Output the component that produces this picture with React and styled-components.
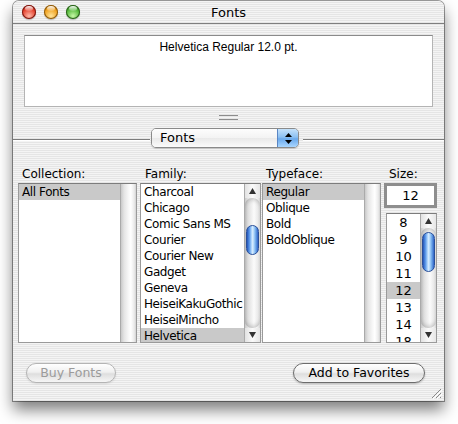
import React from 'react'
import styled, { createGlobalStyle } from 'styled-components'

const GlobalStyle = createGlobalStyle`
  html, body {
    margin: 0;
    padding: 0;
    background: #fff;
  }
  body {
    font-family: "DejaVu Sans", "Liberation Sans", sans-serif;
    color: #000;
  }
`

const pinstripe = `repeating-linear-gradient(to bottom, #f4f4f4 0px, #f4f4f4 1px, #e5e5e5 1px, #e5e5e5 2px)`

const Page = styled.div`
  width: 458px;
  height: 424px;
  box-sizing: border-box;
  padding: 1px 0 0 13px;
`

const Window = styled.div`
  position: relative;
  width: 431px;
  height: 400px;
  display: flex;
  flex-direction: column;
  background: ${pinstripe};
  border-radius: 6px 6px 0 0;
  box-shadow: 0 0 0 1px rgba(0, 0, 0, 0.38), 0 9px 15px rgba(0, 0, 0, 0.5);
`

const TitleBar = styled.div`
  height: 22px;
  border-bottom: 1px solid #7e7e7e;
  display: grid;
  grid-template-columns: 1fr auto 1fr;
  align-items: center;
  padding-left: 9px;
  font-size: 13px;
`

const Lights = styled.div`
  display: flex;
  gap: 8px;
`

const Light = styled.span`
  position: relative;
  width: 14px;
  height: 14px;
  border-radius: 50%;
  background: radial-gradient(circle at 50% 78%, ${p => p.$hi} 0%, ${p => p.$mid} 55%, ${p => p.$lo} 100%);
  box-shadow: inset 0 0 0 1px ${p => p.$edge}, 0 1px 1px rgba(0, 0, 0, 0.25);

  &::after {
    content: '';
    position: absolute;
    left: 3px;
    top: 1px;
    width: 8px;
    height: 5px;
    border-radius: 50%;
    background: linear-gradient(to bottom, rgba(255, 255, 255, 0.95), rgba(255, 255, 255, 0.15));
  }
`

const Title = styled.div`
  padding-right: 9px;
`

const Preview = styled.div`
  margin: 11px 11px 0;
  height: 72px;
  box-sizing: border-box;
  background: #fff;
  border: 1px solid #b4b4b4;
  border-top-color: #8a8a8a;
  font-family: "Liberation Sans", Arial, sans-serif;
  font-size: 12px;
  text-align: center;
  padding-top: 4px;
`

const Grip = styled.div`
  margin: 8px auto 0;
  width: 19px;
  height: 5px;
  box-sizing: border-box;
  border-top: 1px solid #8c8c8c;
  border-bottom: 1px solid #8c8c8c;
`

const PopupRow = styled.div`
  margin-top: 8px;
  height: 20px;
  display: flex;
  align-items: center;
`

const Rule = styled.div`
  flex: ${p => (p.$w ? `0 0 ${p.$w}px` : '1')};
  margin-left: ${p => p.$ml || 0}px;
  margin-top: 2px;
  height: 1px;
  background: #7c7c7c;
  box-shadow: 0 1px 0 #fff;
`

const Popup = styled.div`
  width: 148px;
  height: 20px;
  box-sizing: border-box;
  margin-left: 1px;
  display: flex;
  border: 1px solid #8a8a8a;
  border-radius: 5px;
  overflow: hidden;
  font-size: 13px;
  box-shadow: 0 1px 1px rgba(0, 0, 0, 0.15);
`

const PopupLabel = styled.div`
  flex: 1;
  padding-left: 8px;
  line-height: 18px;
  background: linear-gradient(to bottom, #fdfdfd 0%, #f3f3f3 50%, #e9e9e9 51%, #fbfbfb 100%);
`

const PopupArrows = styled.div`
  width: 20px;
  border-left: 1px solid #5a86c4;
  display: flex;
  align-items: center;
  justify-content: center;
  background: linear-gradient(to bottom, #c5e2fb 0%, #8cc0f2 45%, #6aa9ec 55%, #a9d6ff 100%);
`

const Body = styled.div`
  margin-top: 18px;
  padding-left: 5px;
  display: flex;
`

const Column = styled.div`
  width: ${p => p.$w}px;
  margin-left: ${p => p.$ml || 0}px;
  display: flex;
  flex-direction: column;
`

const Label = styled.div`
  height: 17px;
  line-height: 16px;
  padding-left: ${p => p.$pl || 4}px;
  font-size: 12px;
`

const ListBox = styled.div`
  height: ${p => p.$h}px;
  margin-top: ${p => p.$mt || 0}px;
  margin-left: ${p => p.$ml || 0}px;
  box-sizing: border-box;
  display: flex;
  background: #fff;
  border: 1px solid #9a9a9a;
  border-top-color: #7c7c7c;
  overflow: hidden;
`

const Items = styled.div`
  flex: 1;
  min-width: 0;
  overflow: hidden;
`

const Row = styled.div`
  height: ${p => p.$rh}px;
  line-height: ${p => p.$rh}px;
  padding-left: ${p => (p.$center ? 0 : 3)}px;
  text-align: ${p => (p.$center ? 'center' : 'left')};
  font-size: ${p => (p.$center ? 13 : 12)}px;
  letter-spacing: ${p => (p.$center ? 0 : -0.4)}px;
  white-space: nowrap;
  background: ${p => (p.$selected ? '#c9c9c9' : 'transparent')};
`

const ScrollBar = styled.div`
  flex: none;
  width: 15px;
  display: flex;
  flex-direction: column;
  border-left: 1px solid #aaaaaa;
  background: linear-gradient(to right, #c9c9c9 0%, #e4e4e4 20%, #f7f7f7 50%, #ffffff 65%, #ebebeb 88%, #d2d2d2 100%);
`

const ArrowBtn = styled.div`
  height: 14px;
  flex: none;
  display: flex;
  align-items: center;
  justify-content: center;
  background: linear-gradient(to right, #e2e2e2 0%, #fafafa 50%, #e6e6e6 100%);
`

const Groove = styled.div`
  flex: 1;
  display: flex;
  flex-direction: column;
  align-items: center;
  border-radius: 7px;
  background: linear-gradient(to right, #c2c2c2 0%, #e2e2e2 25%, #fbfbfb 60%, #e0e0e0 100%);
  box-shadow: inset 0 4px 4px -2px rgba(0, 0, 0, 0.18), inset 0 -4px 4px -2px rgba(0, 0, 0, 0.18);
`

const Thumb = styled.div`
  margin-top: ${p => p.$top}px;
  width: 13px;
  height: ${p => p.$h}px;
  box-sizing: border-box;
  border: 1px solid #2a4f98;
  border-radius: 7px;
  background: linear-gradient(to right, #2454b8 0%, #5a97e8 22%, #b3d8fc 42%, #d9eeff 52%, #86bdf3 72%, #2e64c8 100%);
`

const SizeField = styled.div`
  height: 25px;
  box-sizing: border-box;
  border: 3px solid #8e8e8e;
  background: #fff;
  text-align: center;
  line-height: 19px;
  font-size: 13px;
`

const ButtonRow = styled.div`
  margin-top: 20px;
  padding: 0 19px 0 13px;
  display: flex;
  justify-content: space-between;
`

const PillButton = styled.div`
  width: ${p => p.$w}px;
  height: 20px;
  box-sizing: border-box;
  border-radius: 10px;
  border: 1px solid ${p => (p.$disabled ? '#b4b4b4' : '#6c6c6c')};
  background: linear-gradient(to bottom, #ffffff 0%, #f0f0f0 45%, #dedede 55%, #f6f6f6 100%);
  box-shadow: 0 1px 2px rgba(0, 0, 0, ${p => (p.$disabled ? 0.1 : 0.25)});
  color: ${p => (p.$disabled ? '#9b9b9b' : '#000')};
  font-size: 12.5px;
  line-height: 18px;
  text-align: center;
`

const Resize = styled.svg`
  position: absolute;
  right: 2px;
  bottom: 2px;
`

const UpDown = () => (
  <svg width="7" height="11" viewBox="0 0 7 11">
    <path d="M3.5 0 L7 4 L0 4 Z" fill="#000" />
    <path d="M3.5 11 L7 7 L0 7 Z" fill="#000" />
  </svg>
)

const Arrow = ({ down }) => (
  <svg width="7" height="6" viewBox="0 0 7 6">
    <path d={down ? 'M0 0 L7 0 L3.5 6 Z' : 'M3.5 0 L7 6 L0 6 Z'} fill="#333" />
  </svg>
)

const Scroller = ({ thumbTop, thumbHeight }) => {
  if (thumbHeight == null) return <ScrollBar />
  return (
    <ScrollBar>
      <ArrowBtn>
        <Arrow />
      </ArrowBtn>
      <Groove>
        <Thumb $top={thumbTop} $h={thumbHeight} />
      </Groove>
      <ArrowBtn>
        <Arrow down />
      </ArrowBtn>
    </ScrollBar>
  )
}

const families = [
  'Charcoal',
  'Chicago',
  'Comic Sans MS',
  'Courier',
  'Courier New',
  'Gadget',
  'Geneva',
  'HeiseiKakuGothic',
  'HeiseiMincho',
  'Helvetica',
]
const typefaces = ['Regular', 'Oblique', 'Bold', 'BoldOblique']
const sizes = ['8', '9', '10', '11', '12', '13', '14', '18']

export default function App() {
  return (
    <Page>
      <GlobalStyle />
      <Window>
        <TitleBar>
          <Lights>
            <Light $hi="#ffb8a8" $mid="#e4432f" $lo="#9c140b" $edge="#7a1a12" />
            <Light $hi="#ffe49a" $mid="#f0a220" $lo="#b46800" $edge="#8a5a10" />
            <Light $hi="#c6f7a6" $mid="#54b83a" $lo="#1f7812" $edge="#2c5f1c" />
          </Lights>
          <Title>Fonts</Title>
          <span />
        </TitleBar>

        <Preview>Helvetica Regular 12.0 pt.</Preview>
        <Grip />

        <PopupRow>
          <Rule $w={137} />
          <Popup>
            <PopupLabel>Fonts</PopupLabel>
            <PopupArrows>
              <UpDown />
            </PopupArrows>
          </Popup>
          <Rule $ml={4} />
        </PopupRow>

        <Body>
          <Column $w={119}>
            <Label>Collection:</Label>
            <ListBox $h={160}>
              <Items>
                <Row $rh={16} $selected>All Fonts</Row>
              </Items>
              <Scroller />
            </ListBox>
          </Column>

          <Column $w={121} $ml={3}>
            <Label $pl={5}>Family:</Label>
            <ListBox $h={160}>
              <Items>
                {families.map(f => (
                  <Row key={f} $rh={16} $selected={f === 'Helvetica'}>
                    {f}
                  </Row>
                ))}
              </Items>
              <Scroller thumbTop={27} thumbHeight={30} />
            </ListBox>
          </Column>

          <Column $w={119} $ml={1}>
            <Label>Typeface:</Label>
            <ListBox $h={160}>
              <Items>
                {typefaces.map(t => (
                  <Row key={t} $rh={16} $selected={t === 'Regular'}>
                    {t}
                  </Row>
                ))}
              </Items>
              <Scroller />
            </ListBox>
          </Column>

          <Column $w={53} $ml={3}>
            <Label $pl={5}>Size:</Label>
            <SizeField>12</SizeField>
            <ListBox $h={130} $mt={5} $ml={2}>
              <Items>
                {sizes.map(s => (
                  <Row key={s} $rh={17} $center $selected={s === '12'}>
                    {s}
                  </Row>
                ))}
              </Items>
              <Scroller thumbTop={4} thumbHeight={40} />
            </ListBox>
          </Column>
        </Body>

        <ButtonRow>
          <PillButton $w={90} $disabled>
            Buy Fonts
          </PillButton>
          <PillButton $w={132}>Add to Favorites</PillButton>
        </ButtonRow>

        <Resize width="11" height="11" viewBox="0 0 11 11">
          <path d="M10 1 L1 10 M10 5 L5 10 M10 9 L9 10" stroke="#8a8a8a" strokeWidth="1" />
          <path d="M11 2 L2 11 M11 6 L6 11" stroke="#fff" strokeWidth="1" />
        </Resize>
      </Window>
    </Page>
  )
}
